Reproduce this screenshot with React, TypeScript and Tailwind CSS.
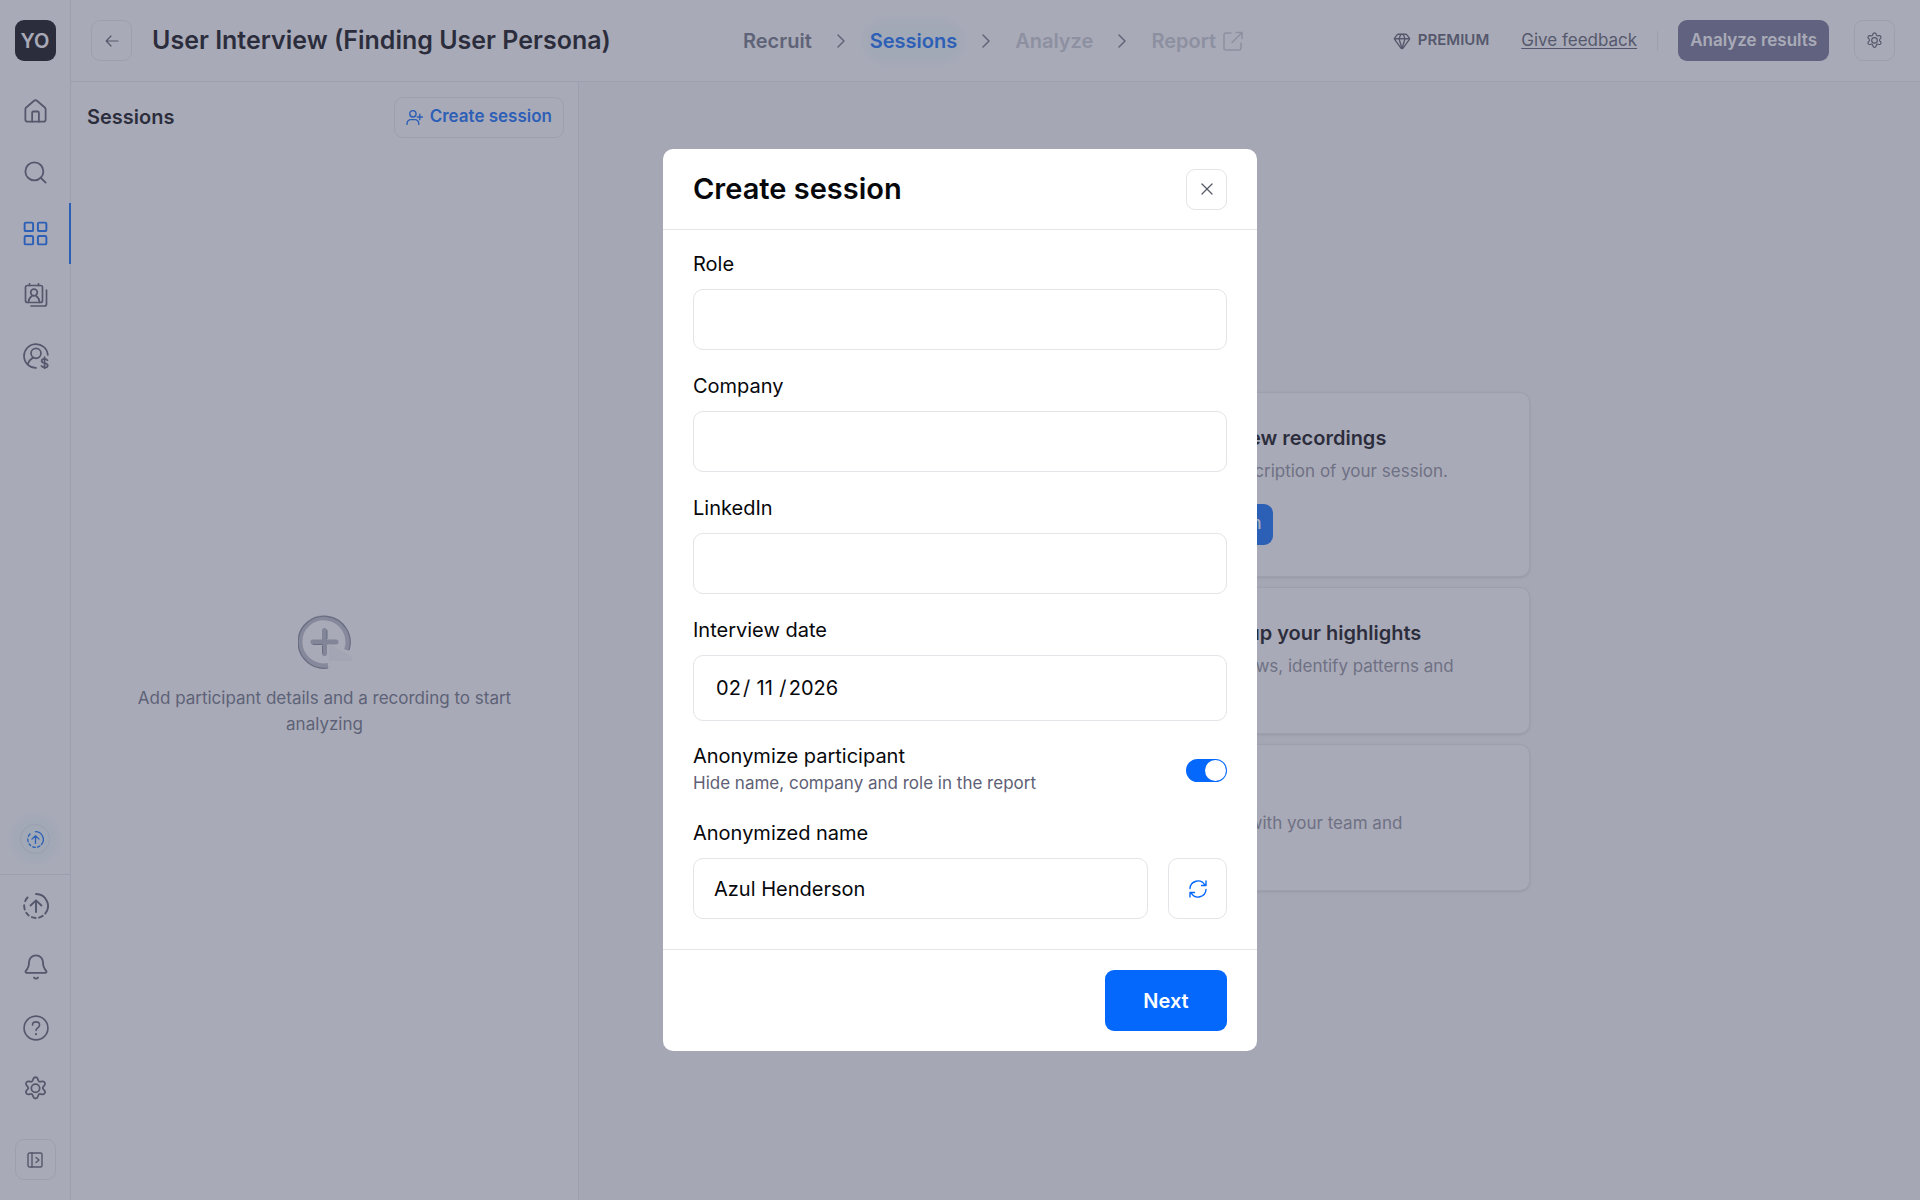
import { useState } from "react";
import type { ReactNode } from "react";
import { Bell, ChevronRight, Gem, House, LayoutGrid, Search, X } from "lucide-react";

type IconProps = { className?: string };

function GearIcon({ className }: IconProps) {
  return (
    <svg className={className} viewBox="0 0 24 24" fill="none" stroke="currentColor" strokeWidth={1.7} strokeLinejoin="round">
      <path d="M12 1.2c1 0 1.9.6 2.2 1.6l.4 1.3c.3 1 1.4 1.6 2.4 1.4l1.4-.3c1-.2 2 .2 2.5 1.1.5.9.4 2-.3 2.7l-1 1c-.7.8-.7 2 0 2.8l1 1c.7.8.8 1.9.3 2.7-.5.9-1.5 1.3-2.5 1.1l-1.4-.3c-1-.2-2.1.4-2.4 1.4l-.4 1.3c-.3 1-1.2 1.6-2.2 1.6s-1.9-.6-2.2-1.6l-.4-1.3c-.3-1-1.4-1.6-2.4-1.4l-1.4.3c-1 .2-2-.2-2.5-1.1-.5-.8-.4-1.9.3-2.7l1-1c.7-.8.7-2 0-2.8l-1-1c-.7-.7-.8-1.8-.3-2.7.5-.9 1.5-1.3 2.5-1.1l1.4.3c1 .2 2.1-.4 2.4-1.4l.4-1.3c.3-1 1.2-1.6 2.2-1.6z" />
      <circle cx="12" cy="11.8" r="4" />
    </svg>
  );
}

function ContactsIcon({ className }: IconProps) {
  return (
    <svg className={className} viewBox="0 0 24 24" fill="none" stroke="currentColor" strokeWidth={1.7} strokeLinecap="round" strokeLinejoin="round">
      <rect x="1.5" y="2.5" width="17" height="17" rx="2" />
      <path d="M5.5 .8v1.7M14.5 .8v1.7M22.5 7v14a2 2 0 0 1-2 2H7" />
      <circle cx="10" cy="9.5" r="3.3" />
      <path d="M4.5 19.3c0-3.2 1.5-5 3.3-6.3M15.5 19.3c0-3.2-1.5-5-3.3-6.3" />
    </svg>
  );
}

function UserDollarIcon({ className }: IconProps) {
  return (
    <svg className={className} viewBox="0 0 24 24" fill="none" stroke="currentColor" strokeWidth={1.6} strokeLinecap="round" strokeLinejoin="round">
      <path d="M12 23A11 11 0 1 1 22.9 11" />
      <circle cx="12" cy="9.5" r="4.6" />
      <path d="M4.5 19.8c.7-3 2.5-5 5-6.3" />
      <path d="M22.5 16c-.5-.9-1.5-1.3-2.7-1.3-1.5 0-2.6.7-2.6 1.9 0 2.8 5.6 1.2 5.6 4.1 0 1.3-1.2 2-2.8 2-1.4 0-2.5-.5-3-1.5M19.9 13v10.8" />
    </svg>
  );
}

function UpgradeIcon({ className }: IconProps) {
  return (
    <svg className={className} viewBox="0 0 24 24" fill="none" stroke="currentColor" strokeWidth={1.8} strokeLinecap="round" strokeLinejoin="round">
      <path d="M12 1a11 11 0 0 1 8.5 18" />
      <path d="M18.2 21.1a11 11 0 0 1-3.5 1.6M11.7 23a11 11 0 0 1-3.6-.7M5.3 20.7a11 11 0 0 1-2.3-2.5M1.6 15.2a11 11 0 0 1-.5-4M2 7.5a11 11 0 0 1 2.2-3.3" />
      <path d="M12 17.5V7M7 11.5L12 6.8l5 4.7" />
    </svg>
  );
}

function HelpIcon({ className }: IconProps) {
  return (
    <svg className={className} viewBox="0 0 24 24" fill="none" stroke="currentColor" strokeWidth={1.5} strokeLinecap="round" strokeLinejoin="round">
      <circle cx="12" cy="12" r="11" />
      <path d="M8.8 9.3c0-1.8 1.4-3 3.2-3s3.3 1.2 3.3 3c0 2.4-3.3 2.6-3.3 4.9" />
      <path d="M12 17.7v.1" strokeWidth={2} />
    </svg>
  );
}

function ExpandIcon({ className }: IconProps) {
  return (
    <svg className={className} viewBox="0 0 16 16" fill="none" stroke="currentColor" strokeWidth={1.4} strokeLinecap="round" strokeLinejoin="round">
      <rect x="1" y="1" width="14" height="14" rx="1.5" />
      <path d="M5 1v14M9 5.5l3 2.5-3 2.5" />
    </svg>
  );
}

function UserPlusIcon({ className }: IconProps) {
  return (
    <svg className={className} viewBox="0 0 16 16" fill="none" stroke="currentColor" strokeWidth={1.3} strokeLinecap="round">
      <circle cx="6.5" cy="4.5" r="3" />
      <path d="M1 14.5v-1a3.5 3.5 0 0 1 3.5-3.5h4A3.5 3.5 0 0 1 12 13.5v1M13 5v5M10.6 7.5h4.9" />
    </svg>
  );
}

function OpenIcon({ className }: IconProps) {
  return (
    <svg className={className} viewBox="0 0 20 20" fill="none" stroke="currentColor" strokeWidth={1.5} strokeLinecap="round" strokeLinejoin="round">
      <path d="M8 2H3a2 2 0 0 0-2 2v13a2 2 0 0 0 2 2h13a2 2 0 0 0 2-2v-5M13 1.5h6v6M18.5 2L9 11.5" />
    </svg>
  );
}

function ArrowLeftIcon({ className }: IconProps) {
  return (
    <svg className={className} viewBox="0 0 14 14" fill="none" stroke="currentColor" strokeWidth={1.2} strokeLinecap="round" strokeLinejoin="round">
      <path d="M13 7H1.2M6 2L1.2 7 6 12" />
    </svg>
  );
}

function RefreshIcon({ className }: IconProps) {
  return (
    <svg className={className} viewBox="0 0 18 18" fill="none" stroke="currentColor" strokeWidth={1.4} strokeLinecap="round" strokeLinejoin="round">
      <path d="M1 8.5a8 8 0 0 1 14.8-3.7M17 1v4.5h-4.5M17 9.5a8 8 0 0 1-14.8 3.7M1 17v-4.5h4.5" />
    </svg>
  );
}

// Ring with a plus, lower right quarter covered by the cursor
function AddArt() {
  return (
    <svg className="h-[54px] w-[54px]" viewBox="0 0 54 54" fill="none">
      <path d="M30 50.5A24 24 0 1 1 48.5 35" stroke="#b9bdc6" strokeWidth="5" />
      <path d="M30 53A26 26 0 1 1 51 35" stroke="#7f8594" strokeWidth="1.2" />
      <path d="M15 27h23M26.5 15.5v23" stroke="#b0b4be" strokeWidth="5" strokeLinecap="round" />
      <path d="M15 29.5h9M29 15.5v8M24.5 31v7" stroke="#7f8594" strokeWidth="1" strokeLinecap="round" />
      <path d="M31 29l23 13v4H31z" fill="#f3f3f8" />
    </svg>
  );
}

function SideLink({ label, active, children }: { label: string; active?: boolean; children: ReactNode }) {
  return (
    <a
      href="#"
      aria-label={label}
      className={`-mr-px flex h-[61px] items-center justify-center border-x-2 border-l-transparent ${
        active ? "border-r-[#0568fd] text-[#0568fd]" : "border-r-transparent text-[#565b69]"
      }`}
    >
      {children}
    </a>
  );
}

function Sidebar() {
  return (
    <aside className="flex w-[71px] shrink-0 flex-col border-r border-[#e6e8ec] bg-white">
      <div className="flex h-[81px] items-center justify-center">
        <div className="flex h-[41px] w-[41px] items-center justify-center rounded-[9px] bg-[#030408] text-xl font-semibold text-white">
          YO
        </div>
      </div>
      <nav>
        <SideLink label="Home"><House className="h-[27px] w-[27px]" strokeWidth={1.6} /></SideLink>
        <SideLink label="Search"><Search className="h-[27px] w-[27px]" strokeWidth={1.6} /></SideLink>
        <SideLink label="Projects" active><LayoutGrid className="h-[29px] w-[29px]" strokeWidth={1.6} /></SideLink>
        <SideLink label="Participants"><ContactsIcon className="h-6 w-6" /></SideLink>
        <SideLink label="Incentives"><UserDollarIcon className="h-[26px] w-[26px]" /></SideLink>
      </nav>
      <div className="mt-auto flex justify-center pb-5">
        <button
          aria-label="Upgrade"
          className="flex h-[30px] w-[30px] items-center justify-center rounded-full border border-[#e2e8f0] bg-[#eefafc] text-[#0568fd] shadow-[0_0_18px_6px_#e4f7fb]"
        >
          <UpgradeIcon className="h-[17px] w-[17px]" />
        </button>
      </div>
      <div className="border-t border-[#e6e8ec] pb-5">
        <SideLink label="Usage"><UpgradeIcon className="h-[26px] w-[26px]" /></SideLink>
        <SideLink label="Notifications"><Bell className="h-7 w-7" strokeWidth={1.6} /></SideLink>
        <SideLink label="Help"><HelpIcon className="h-[26px] w-[26px]" /></SideLink>
        <SideLink label="Settings"><GearIcon className="h-[25px] w-[25px]" /></SideLink>
        <div className="flex justify-center pt-5">
          <button aria-label="Expand menu" className="flex h-[41px] w-[41px] items-center justify-center rounded-[9px] border border-[#e6e8ec] text-[#565b69]">
            <ExpandIcon className="h-4 w-4" />
          </button>
        </div>
      </div>
    </aside>
  );
}

function StepArrow() {
  return <ChevronRight className="h-6 w-6 text-[#6f7481]" strokeWidth={1.5} />;
}

function Header() {
  return (
    <header className="grid h-[82px] shrink-0 grid-cols-[1fr_auto_1fr] items-center border-b border-[#e6e8ec] bg-white pr-[25px] pl-5">
      <div className="flex items-center gap-5">
        <button aria-label="Back" className="flex h-[41px] w-[41px] items-center justify-center rounded-[9px] border border-[#e6e8ec] text-[#565b69]">
          <ArrowLeftIcon className="h-[14px] w-[14px]" />
        </button>
        <h1 className="text-[25px] font-semibold whitespace-nowrap text-[#030408]">User Interview (Finding User Persona)</h1>
      </div>

      <nav className="flex items-center gap-[17px] text-xl font-semibold">
        <a href="#" className="text-[#6b7080]">Recruit</a>
        <StepArrow />
        <a href="#" className="rounded-full bg-[#eefafc] text-[#0568fd] shadow-[0_0_16px_8px_#eefafc]">Sessions</a>
        <StepArrow />
        <a href="#" className="text-[#c6cad2]">Analyze</a>
        <StepArrow />
        <a href="#" className="flex items-center gap-[7px] text-[#c6cad2]">
          Report
          <OpenIcon className="h-5 w-5" />
        </a>
      </nav>

      <div className="flex items-center justify-end">
        <div className="flex items-center gap-[7px] text-[15px] font-semibold text-[#565b69]">
          <Gem className="h-[18px] w-[18px]" strokeWidth={1.8} />
          PREMIUM
        </div>
        <a href="#" className="ml-8 text-[17px] whitespace-nowrap text-[#565b69] underline underline-offset-2">Give feedback</a>
        <div className="mx-5 h-5 w-px bg-[#e6e8ec]" />
        <button className="h-[41px] rounded-[9px] bg-[#6c6e8e] px-3 text-[17px] font-semibold whitespace-nowrap text-white">
          Analyze results
        </button>
        <button aria-label="Project settings" className="ml-[25px] flex h-[41px] w-[41px] items-center justify-center rounded-[9px] border border-[#e6e8ec] text-[#565b69]">
          <GearIcon className="h-[17px] w-[17px]" />
        </button>
      </div>
    </header>
  );
}

function SessionsPanel() {
  return (
    <section className="flex w-[508px] shrink-0 flex-col border-r border-[#e6e8ec] bg-white">
      <div className="flex h-[70px] items-center justify-between pr-[14px] pl-4">
        <h2 className="text-xl font-semibold text-[#030408]">Sessions</h2>
        <button className="flex h-[41px] items-center gap-[7px] rounded-[9px] border border-[#e6e8ec] px-[11px] text-[17px] font-semibold text-[#0568fd]">
          <UserPlusIcon className="h-[17px] w-[17px]" />
          Create session
        </button>
      </div>
      <div className="flex grow flex-col items-center justify-center gap-4 px-12">
        <AddArt />
        <p className="text-center text-[17px] leading-[26px] text-[#676e80]">
          Add participant details and a recording to start analyzing
        </p>
      </div>
    </section>
  );
}

function StepCard({ title, text, children }: { title: string; text: string; children?: ReactNode }) {
  return (
    <div className="rounded-[10px] border border-[#e6e8ec] bg-white pt-[30px] pr-14 pb-7 pl-[134px] shadow-sm">
      <h3 className="text-xl leading-[30px] font-semibold text-[#030408]">{title}</h3>
      <p className="mt-[5px] text-[17px] leading-[26px] text-[#888c98]">{text}</p>
      {children}
    </div>
  );
}

function Field({ id, label, children }: { id: string; label: string; children: ReactNode }) {
  return (
    <div className="flex flex-col gap-[11px]">
      <label htmlFor={id} className="text-xl leading-7">{label}</label>
      {children}
    </div>
  );
}

const inputClass = "h-[61px] w-full min-w-0 rounded-[10px] border border-[#e3e4e8] bg-white px-5 text-xl outline-none";

function CreateSessionDialog() {
  const [role, setRole] = useState("");
  const [company, setCompany] = useState("");
  const [linkedIn, setLinkedIn] = useState("");
  const [month, setMonth] = useState("02");
  const [day, setDay] = useState("11");
  const [year, setYear] = useState("2026");
  const [anonymize, setAnonymize] = useState(true);
  const [alias, setAlias] = useState("Azul Henderson");

  return (
    <div className="fixed inset-0 flex items-center justify-center bg-[#545670]/50">
      <form
        role="dialog"
        aria-labelledby="dialog-title"
        className="w-full max-w-[594px] rounded-[10px] bg-white text-[#07080c]"
        onSubmit={(e) => e.preventDefault()}
      >
        <div className="flex h-[81px] items-center justify-between border-b border-[#e3e4e8] px-[30px]">
          <h2 id="dialog-title" className="text-[29px] font-semibold">Create session</h2>
          <button type="button" aria-label="Close" className="flex h-[41px] w-[41px] items-center justify-center rounded-[9px] border border-[#e3e4e8] text-[#565b69]">
            <X className="h-5 w-5" strokeWidth={1.5} />
          </button>
        </div>

        <div className="flex flex-col gap-[22px] px-[30px] pt-5 pb-[30px]">
          <Field id="role" label="Role">
            <input id="role" className={inputClass} value={role} onChange={(e) => setRole(e.target.value)} />
          </Field>
          <Field id="company" label="Company">
            <input id="company" className={inputClass} value={company} onChange={(e) => setCompany(e.target.value)} />
          </Field>
          <Field id="linkedin" label="LinkedIn">
            <input id="linkedin" className={inputClass} value={linkedIn} onChange={(e) => setLinkedIn(e.target.value)} />
          </Field>
          <Field id="month" label="Interview date">
            <div className="flex h-[66px] items-center rounded-[10px] border border-[#e3e4e8] px-5 text-xl">
              <input id="month" className="w-[29px] text-center outline-none" value={month} onChange={(e) => setMonth(e.target.value)} />
              <span>/</span>
              <input aria-label="Day" className="w-[29px] text-center outline-none" value={day} onChange={(e) => setDay(e.target.value)} />
              <span>/</span>
              <input aria-label="Year" className="w-[54px] text-center outline-none" value={year} onChange={(e) => setYear(e.target.value)} />
            </div>
          </Field>

          <div className="flex items-center justify-between">
            <label htmlFor="anonymize">
              <span className="block text-xl leading-[27px]">Anonymize participant</span>
              <span className="block text-[17px] leading-[27px] text-[#5e6075]">Hide name, company and role in the report</span>
            </label>
            <input
              id="anonymize"
              type="checkbox"
              role="switch"
              checked={anonymize}
              onChange={(e) => setAnonymize(e.target.checked)}
              className="flex h-[23px] w-[41px] appearance-none items-center rounded-full bg-[#c6cad2] p-px before:h-[21px] before:w-[21px] before:rounded-full before:bg-white checked:justify-end checked:bg-[#0568fd]"
            />
          </div>

          <Field id="alias" label="Anonymized name">
            <div className="flex gap-5">
              <input id="alias" className={inputClass} value={alias} onChange={(e) => setAlias(e.target.value)} />
              <button type="button" aria-label="Generate another name" className="flex h-[61px] w-[59px] shrink-0 items-center justify-center rounded-[10px] border border-[#e3e4e8] text-[#0568fd]">
                <RefreshIcon className="h-[18px] w-[18px]" />
              </button>
            </div>
          </Field>
        </div>

        <div className="flex justify-end border-t border-[#e3e4e8] px-[30px] py-5">
          <button type="submit" className="h-[61px] w-[122px] rounded-[9px] bg-[#0568fd] text-xl font-semibold text-white">Next</button>
        </div>
      </form>
    </div>
  );
}

export default function App() {
  return (
    <div className="flex h-screen font-[Inter,sans-serif]">
      <Sidebar />
      <div className="flex min-w-0 grow flex-col">
        <Header />
        <div className="flex min-h-0 grow">
          <SessionsPanel />
          <main className="flex grow flex-col items-center justify-center bg-[#f7f8fa]">
            <div className="flex w-full max-w-[560px] flex-col gap-[10px]">
              <StepCard title="Manage interview recordings" text="Add a title and description of your session.">
                <button className="mt-5 mb-[3px] flex h-[41px] items-center gap-[7px] rounded-[9px] bg-[#0568fd] px-3 text-[17px] font-medium text-white">
                  <UserPlusIcon className="h-[17px] w-[17px]" />
                  Create session
                </button>
              </StepCard>
              <StepCard title="Create and group your highlights" text="Analyze all interviews, identify patterns and build insights" />
              <StepCard title="Share report" text="Share the reports with your team and stakeholders" />
            </div>
          </main>
        </div>
      </div>
      <CreateSessionDialog />
    </div>
  );
}
